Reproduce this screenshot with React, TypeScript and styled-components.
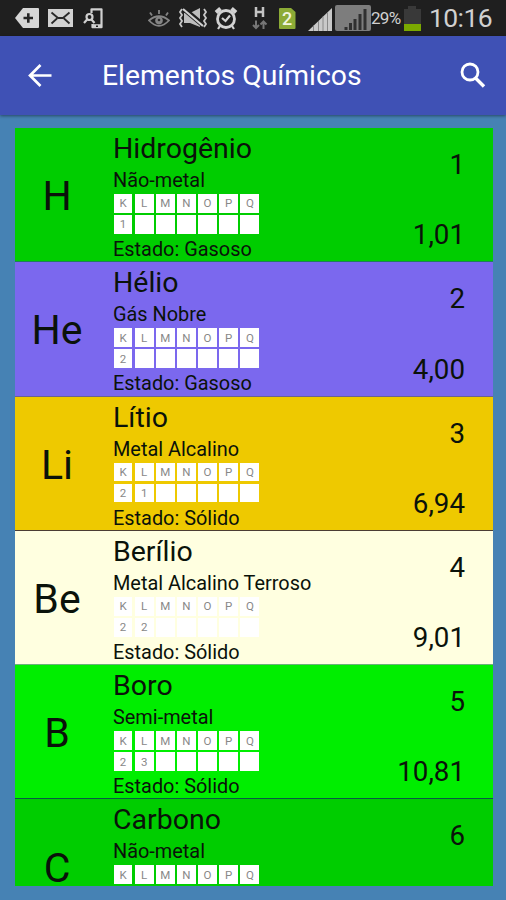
import React from "react";
import styled, { createGlobalStyle } from "styled-components";

const GlobalStyle = createGlobalStyle`
  * { box-sizing: border-box; }
  html, body, #root { margin: 0; padding: 0; height: 100%; }
  body { background: #4682b4; font-family: Roboto, sans-serif; overflow: hidden; }
`;

const Screen = styled.div`
  width: 506px;
  height: 900px;
  display: flex;
  flex-direction: column;
  background: #4682b4;
  overflow: hidden;
`;

const StatusBar = styled.header`
  flex: none;
  display: flex;
  align-items: center;
  height: 36px;
  background: #1f1f1f;
  color: #d0d0d0;
`;

const StatusIcon = styled.svg<{ $gap?: number }>`
  flex: none;
  display: block;
  margin-left: ${(p) => p.$gap ?? 0}px;
`;

const Percent = styled.span`
  width: 33px;
  flex: none;
  font-size: 17px;
  letter-spacing: -0.7px;
  white-space: nowrap;
`;

const Clock = styled.span`
  margin-left: 8px;
  font-size: 26.5px;
  letter-spacing: -0.6px;
  line-height: 36px;
`;

const Toolbar = styled.nav`
  flex: none;
  display: flex;
  align-items: center;
  height: 79px;
  padding: 0 19px 0 27px;
  background: #3f51b5;
  box-shadow: 0 1px 3px rgba(0, 0, 0, 0.45);
  z-index: 1;
`;

const Title = styled.h1`
  flex: 1;
  margin: 0 0 0 49px;
  color: #fff;
  font-size: 28.3px;
  font-weight: 400;
  line-height: 36px;
`;

const List = styled.main`
  flex: none;
  height: 758px;
  margin: 13px 13.5px 0 14.5px;
  overflow: hidden;
`;

const Row = styled.article<{ $color: string; $line: string }>`
  display: grid;
  grid-template-columns: 85px 1fr 100px;
  height: 134.3px;
  padding-right: 27.5px;
  background: ${(p) => p.$color};
  border-bottom: 1.3px solid ${(p) => p.$line};
  color: #0a120a;
`;

const Symbol = styled.div`
  display: flex;
  align-items: center;
  justify-content: center;
  padding-top: 3px;
  font-size: 41px;
`;

const Details = styled.div`
  padding-left: 13.5px;
  white-space: nowrap;
`;

const Name = styled.h2`
  margin: 3px 0 0;
  font-size: 28.5px;
  font-weight: 400;
  line-height: 36px;
`;

const Caption = styled.p`
  height: 26px;
  margin: 0;
  font-size: 19.9px;
  line-height: 27px;
`;

const Shells = styled.div`
  display: grid;
  grid-template-columns: repeat(7, 18.8px);
  grid-auto-rows: 18.7px;
  gap: 2.35px;
  height: 42px;
  padding-top: 1px;
  margin-left: 0.6px;
`;

const Cell = styled.span`
  display: flex;
  align-items: center;
  justify-content: center;
  background: #fff;
  color: #888;
  font-size: 11.5px;
`;

const StateCaption = styled(Caption)`
  padding-top: 1px;
`;

const Values = styled.div`
  display: flex;
  flex-direction: column;
  justify-content: space-between;
  align-items: flex-end;
  padding: 20px 0 9px;
  font-size: 27.7px;
  line-height: 34px;
`;

const elements = [
  { symbol: "H", name: "Hidrogênio", kind: "Não-metal", shells: [1], state: "Gasoso", number: 1, mass: "1,01", color: "#00cd00", line: "#1f7f5c" },
  { symbol: "He", name: "Hélio", kind: "Gás Nobre", shells: [2], state: "Gasoso", number: 2, mass: "4,00", color: "#7b68ee", line: "#6a6291" },
  { symbol: "Li", name: "Lítio", kind: "Metal Alcalino", shells: [2, 1], state: "Sólido", number: 3, mass: "6,94", color: "#eec900", line: "#4b3d34" },
  { symbol: "Be", name: "Berílio", kind: "Metal Alcalino Terroso", shells: [2, 2], state: "Sólido", number: 4, mass: "9,01", color: "#ffffe0", line: "#6ab27a" },
  { symbol: "B", name: "Boro", kind: "Semi-metal", shells: [2, 3], state: "Sólido", number: 5, mass: "10,81", color: "#00ee00", line: "#075a47" },
  { symbol: "C", name: "Carbono", kind: "Não-metal", shells: [2, 4], state: "Sólido", number: 6, mass: "12,01", color: "#00cd00", line: "#1f7f5c" },
];

const shellNames = ["K", "L", "M", "N", "O", "P", "Q"];

function SystemStatus() {
  return (
    <StatusBar>
      <StatusIcon $gap={15} width="24" height="20" viewBox="0 0 24 20">
        <path d="M8 0H23Q24 0 24 1V19Q24 20 23 20H8L0 10Z" fill="#d6d6d6" />
        <path d="M8.5 10H18M13.3 5.2V14.8" stroke="#242424" strokeWidth="2.6" />
      </StatusIcon>
      <StatusIcon $gap={9} width="25" height="18" viewBox="0 0 25 18">
        <path d="M0 0H25V18H0Z" fill="#d2d2d2" />
        <path d="M3.5 3.5L10 9H15L21.5 3.5M3.5 14.5L9 9.5M21.5 14.5L16 9.5" fill="none" stroke="#292929" strokeWidth="1.8" />
      </StatusIcon>
      <StatusIcon $gap={10} width="20" height="21" viewBox="0 0 20 21" fill="none" stroke="#d0d0d0">
        <path d="M8.5 5V1.3H18.5V19.2H9.5V16" strokeWidth="2.2" strokeLinejoin="round" />
        <path d="M9 18H19" strokeWidth="3.6" />
        <path d="M13 18.3H15" stroke="#1f1f1f" strokeWidth="1.4" />
        <circle cx="6.5" cy="9" r="3" strokeWidth="2.2" />
        <path d="M4.3 11.3L1 15M8.5 11.5L11.5 15" strokeWidth="2.2" />
      </StatusIcon>
      <StatusIcon $gap={45} width="22" height="19" viewBox="0 0 22 19" fill="none" stroke="#858585" strokeWidth="1.8">
        <path d="M1 11.5Q11 3 21 11.5Q11 22 1 11.5Z" />
        <circle cx="11" cy="11.5" r="3.8" fill="#858585" stroke="none" />
        <circle cx="11" cy="11" r="1.3" fill="#292929" stroke="none" />
        <path d="M11 5V1M4 6.5L2 3.5M18 6.5L20 3.5" />
      </StatusIcon>
      <StatusIcon $gap={8} width="31" height="20" viewBox="0 0 31 20">
        <path d="M6 5H12L22 0V19L12 15H6Z" fill="#bdbdbd" />
        <path d="M6 1L25 17" stroke="#1f1f1f" strokeWidth="5" />
        <path d="M5 1L25 18" stroke="#d0d0d0" strokeWidth="2.2" />
        <path d="M4 1L2 4L4 7L2 10L4 13L2 16L4 19M26 1L28 4L26 7L28 10L26 13L28 16L26 19" fill="none" stroke="#c8c8c8" strokeWidth="1.8" />
      </StatusIcon>
      <StatusIcon $gap={5} width="24" height="24" viewBox="0 0 24 24" fill="none" stroke="#d2d2d2">
        <circle cx="12" cy="13" r="8.5" strokeWidth="2.8" />
        <path d="M2 6.5L6.5 2.5M22 6.5L17.5 2.5" strokeWidth="4" />
        <path d="M8 12L11.5 15L16 9.5M6 20L4 23M18 20L20 23" strokeWidth="2.2" />
      </StatusIcon>
      <StatusIcon $gap={14} width="16" height="24" viewBox="0 0 16 24" fill="none">
        <path d="M4 1V11M11 1V11M4 6H11" stroke="#c4c4c4" strokeWidth="2.5" />
        <path d="M4 14.5V22M1 19L4 22L7 19M11.5 23V15.5M8.5 18.5L11.5 15.5L14.5 18.5" stroke="#777" strokeWidth="2" />
      </StatusIcon>
      <StatusIcon $gap={11} width="18" height="21" viewBox="0 0 18 21">
        <path d="M1 0H12L16.5 4V20Q16.5 21 15.5 21H1Q0 21 0 20V1Q0 0 1 0Z" fill="#8cab36" />
        <text x="8.2" y="16.8" textAnchor="middle" fill="#f1f5de" fontSize="18" fontWeight="500">2</text>
      </StatusIcon>
      <StatusIcon $gap={11} width="25" height="26" viewBox="0 0 25 26">
        <path d="M0 26L24 3V26Z" fill="#c9c9c9" />
        <path d="M5.5 20.5V26M10.5 16V26M15 11.5V26M19.5 7V26" stroke="#888" strokeWidth="1" />
      </StatusIcon>
      <StatusIcon $gap={2} width="36" height="27" viewBox="0 0 36 27">
        <rect width="36" height="26" rx="2" fill="#7d7d7d" />
        <path d="M11 25V22M15.5 25V18M20 25V14M25 25V9M30 25V4" stroke="#303030" strokeWidth="3" />
      </StatusIcon>
      <Percent>29%</Percent>
      <StatusIcon width="17" height="25" viewBox="0 0 17 25">
        <path d="M0 3H4V0H12V3H17V25H0Z" fill="#393939" />
        <path d="M0 18H17V25H0Z" fill="#7ba900" />
      </StatusIcon>
      <Clock>10:16</Clock>
    </StatusBar>
  );
}

function ElementRow({ item }: { item: (typeof elements)[number] }) {
  return (
    <Row $color={item.color} $line={item.line}>
      <Symbol>{item.symbol}</Symbol>
      <Details>
        <Name>{item.name}</Name>
        <Caption>{item.kind}</Caption>
        <Shells>
          {shellNames.map((shell) => <Cell key={shell}>{shell}</Cell>)}
          {shellNames.map((shell, index) => <Cell key={`${shell}-count`}>{item.shells[index]}</Cell>)}
        </Shells>
        <StateCaption>Estado: {item.state}</StateCaption>
      </Details>
      <Values>
        <span>{item.number}</span>
        <span>{item.mass}</span>
      </Values>
    </Row>
  );
}

export default function App() {
  return (
    <>
      <GlobalStyle />
      <Screen>
        <SystemStatus />
        <Toolbar>
          <svg width="26" height="26" viewBox="0 0 26 26" fill="none" stroke="#fff" strokeWidth="2.7">
            <path d="M24.5 12.5H4M13.5 2L3 12.5L13.5 23" />
          </svg>
          <Title>Elementos Químicos</Title>
          <svg width="28" height="28" viewBox="0 0 28 28" fill="none" stroke="#fff">
            <circle cx="11" cy="10" r="8" strokeWidth="2.8" />
            <path d="M16.5 16L25 24.5" strokeWidth="3.4" />
          </svg>
        </Toolbar>
        <List>
          {elements.map((item) => <ElementRow key={item.symbol} item={item} />)}
        </List>
      </Screen>
    </>
  );
}
